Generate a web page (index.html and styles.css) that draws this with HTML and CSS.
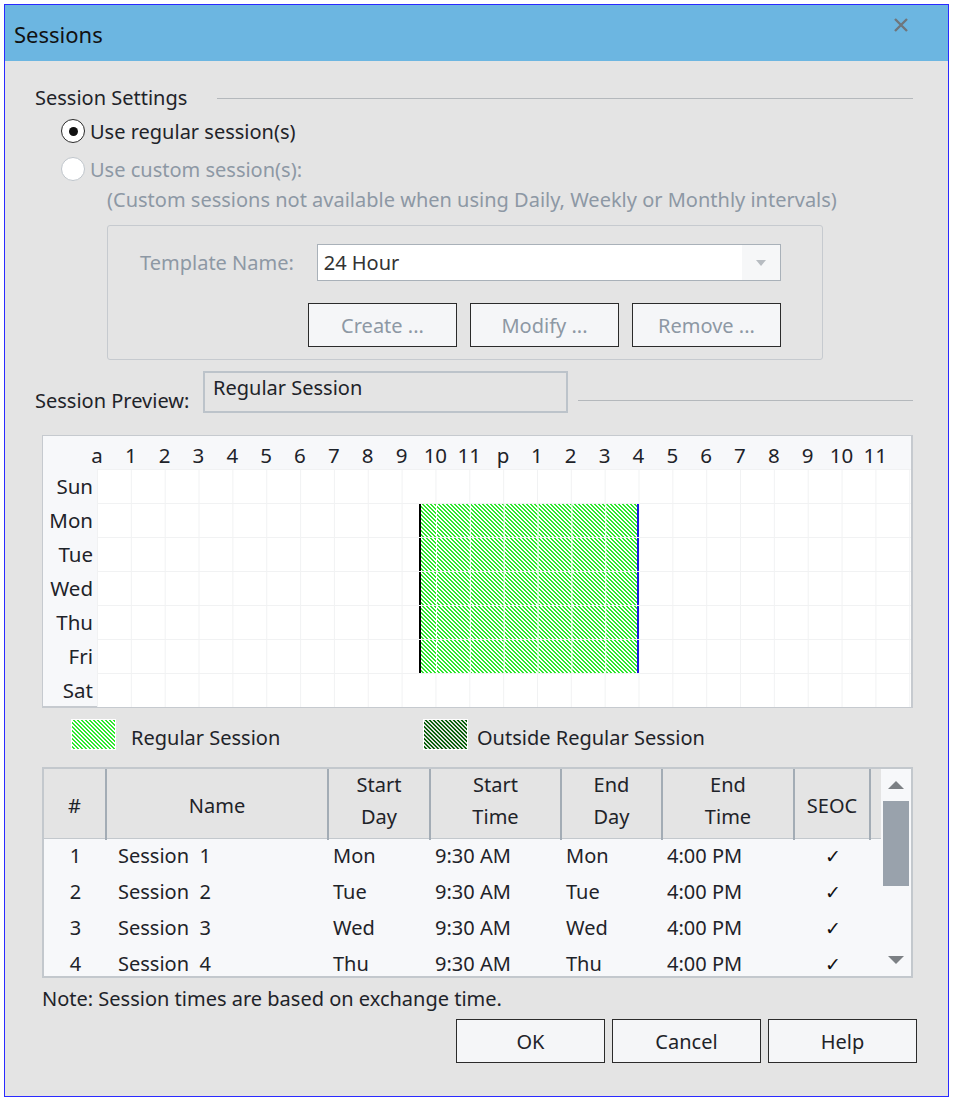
FILE: index.html
```html
<!DOCTYPE html>
<html>
<head>
<meta charset="utf-8">
<link rel="stylesheet" href="styles.css">
</head>
<body>
<div class="dialog">
  <div class="titlebar">
    <span class="title">Sessions</span>
    <svg class="close" width="16" height="16" viewBox="0 0 16 16"><path d="M2 2 L14 14 M14 2 L2 14" stroke="#6f767c" stroke-width="2.4" fill="none"/></svg>
  </div>
  <div class="body">
    <div class="heading"><span>Session Settings</span></div>
    <div class="radio-row"><span class="radio checked"></span><span>Use regular session(s)</span></div>
    <div class="radio-row disabled"><span class="radio"></span><span>Use custom session(s):</span></div>
    <div class="custom-note">(Custom sessions not available when using Daily, Weekly or Monthly intervals)</div>
    <div class="group">
      <div class="tpl-row">
        <span class="tpl-label">Template Name:</span>
        <div class="combo"><span class="combo-text">24 Hour</span><span class="combo-btn"><span class="tri"></span></span></div>
      </div>
      <div class="tpl-buttons">
        <button class="btn dis">Create ...</button>
        <button class="btn dis">Modify ...</button>
        <button class="btn dis">Remove ...</button>
      </div>
    </div>
    <div class="preview-row">
      <span class="preview-label">Session Preview:</span>
      <div class="preview-box">Regular Session</div>
      <div class="preview-line"></div>
    </div>
    <div class="chart">
      <div class="chart-head">
        <div class="head-spacer"></div>
        <div class="hours">
          <span>a</span><span>1</span><span>2</span><span>3</span><span>4</span><span>5</span><span>6</span><span>7</span><span>8</span><span>9</span><span>10</span><span>11</span><span>p</span><span>1</span><span>2</span><span>3</span><span>4</span><span>5</span><span>6</span><span>7</span><span>8</span><span>9</span><span>10</span><span>11</span>
        </div>
      </div>
      <div class="chart-row"><span class="day">Sun</span><div class="cells"></div></div>
      <div class="chart-row"><span class="day">Mon</span><div class="cells"><div class="sess"></div></div></div>
      <div class="chart-row"><span class="day">Tue</span><div class="cells"><div class="sess"></div></div></div>
      <div class="chart-row"><span class="day">Wed</span><div class="cells"><div class="sess"></div></div></div>
      <div class="chart-row"><span class="day">Thu</span><div class="cells"><div class="sess"></div></div></div>
      <div class="chart-row"><span class="day">Fri</span><div class="cells"><div class="sess"></div></div></div>
      <div class="chart-row"><span class="day">Sat</span><div class="cells"></div></div>
    </div>
    <div class="legend">
      <span class="swatch reg"></span><span class="leg-text">Regular Session</span>
      <span class="swatch out"></span><span class="leg-text">Outside Regular Session</span>
    </div>
    <div class="table">
      <div class="tbl-main">
        <div class="trow thead">
          <div class="c one">#</div>
          <div class="c one">Name</div>
          <div class="c">Start<br>Day</div>
          <div class="c">Start<br>Time</div>
          <div class="c">End<br>Day</div>
          <div class="c">End<br>Time</div>
          <div class="c one">SEOC</div>
          <div class="c"></div>
        </div>
        <div class="trow tdata"><div class="c num">1</div><div class="c name">Session&nbsp;&nbsp;1</div><div class="c">Mon</div><div class="c">9:30 AM</div><div class="c">Mon</div><div class="c">4:00 PM</div><div class="c chk">&#10003;</div><div class="c"></div></div>
        <div class="trow tdata"><div class="c num">2</div><div class="c name">Session&nbsp;&nbsp;2</div><div class="c">Tue</div><div class="c">9:30 AM</div><div class="c">Tue</div><div class="c">4:00 PM</div><div class="c chk">&#10003;</div><div class="c"></div></div>
        <div class="trow tdata"><div class="c num">3</div><div class="c name">Session&nbsp;&nbsp;3</div><div class="c">Wed</div><div class="c">9:30 AM</div><div class="c">Wed</div><div class="c">4:00 PM</div><div class="c chk">&#10003;</div><div class="c"></div></div>
        <div class="trow tdata"><div class="c num">4</div><div class="c name">Session&nbsp;&nbsp;4</div><div class="c">Thu</div><div class="c">9:30 AM</div><div class="c">Thu</div><div class="c">4:00 PM</div><div class="c chk">&#10003;</div><div class="c"></div></div>
      </div>
      <div class="scrollbar">
        <span class="arrow up"></span>
        <span class="thumb"></span>
        <span class="sb-fill"></span>
        <span class="arrow down"></span>
      </div>
    </div>
    <div class="footnote">Note: Session times are based on exchange time.</div>
    <div class="footer">
      <button class="btn">OK</button>
      <button class="btn">Cancel</button>
      <button class="btn">Help</button>
    </div>
  </div>
</div>
</body>
</html>
```
FILE: styles.css
```css
* { box-sizing: border-box; }
body {
  margin: 0;
  background: #ffffff;
  font-family: "Noto Sans", "Open Sans", sans-serif;
  font-size: 20px;
  color: #1e2329;
}
.dialog {
  margin: 4px 0 0 4px;
  width: 945px;
  height: 1093px;
  border: 1px solid #2a2aff;
  background: #e4e4e4;
}
.titlebar {
  height: 56px;
  background: #6cb6e1;
  display: flex;
  align-items: center;
  justify-content: space-between;
  padding: 0 39px 0 9px;
}
.title { font-size: 22px; color: #111; margin-top: 2px; }
.close { margin-top: -16px; }
.body { padding: 0 35px 0 37px; }
.heading {
  margin: 25px 0 0 -7px;
  height: 24px;
  line-height: 24px;
  display: flex;
  align-items: center;
}
.heading::after {
  content: "";
  flex: 1;
  height: 1px;
  background: #b4b8bc;
  margin-left: 30px;
}
.radio-row {
  display: flex;
  align-items: center;
  height: 26px;
  margin: 8px 0 0 19px;
}
.radio-row.disabled { margin-top: 12px; color: #8d98a4; }
.radio {
  width: 24px;
  height: 24px;
  border-radius: 50%;
  border: 1px solid #2a2a2a;
  background: #fff;
  margin-right: 5px;
  display: flex;
  align-items: center;
  justify-content: center;
}
.radio.checked::after {
  content: "";
  width: 9px;
  height: 9px;
  border-radius: 50%;
  background: #111;
}
.disabled .radio { border-color: #bfc5cb; }
.custom-note {
  margin: 5px 0 0 65px;
  height: 26px;
  line-height: 26px;
  color: #8d98a4;
}
.group {
  margin: 12px 0 0 65px;
  width: 716px;
  height: 135px;
  border: 1px solid #c6cacf;
  border-radius: 3px;
  padding: 18px 41px 0 32px;
}
.tpl-row { display: flex; align-items: center; }
.tpl-label { color: #8d98a4; width: 177px; }
.combo {
  width: 465px;
  height: 37px;
  background: #fff;
  border: 1px solid #a9b1b9;
  display: flex;
}
.combo-text { flex: 1; padding-left: 6px; line-height: 36px; color: #333; }
.combo-btn {
  width: 38px;
  background: #f6f7f8;
  display: flex;
  align-items: center;
  justify-content: center;
}
.tri {
  width: 0; height: 0;
  border-left: 5px solid transparent;
  border-right: 5px solid transparent;
  border-top: 6px solid #b7bcc1;
}
.tpl-buttons {
  margin-top: 22px;
  display: flex;
  justify-content: flex-end;
  gap: 13px;
}
.btn {
  width: 149px;
  height: 44px;
  background: #f5f6f8;
  border: 1px solid #2b2b2b;
  font-family: inherit;
  font-size: 20px;
  color: #1e2329;
  padding: 0;
}
.btn.dis { color: #8d98a4; }
.preview-row {
  margin: 11px 0 0 -7px;
  display: flex;
  align-items: flex-start;
  height: 42px;
}
.preview-label { margin-top: 16px; width: 168px; }
.preview-box {
  width: 365px;
  height: 42px;
  border: 2px solid #bcc3ca;
  padding: 0 0 0 8px;
  line-height: 30px;
}
.preview-line {
  flex: 1;
  height: 1px;
  background: #b4b8bc;
  margin: 29px 0 0 10px;
}
.chart {
  margin-top: 22px;
  height: 273px;
  border: 1px solid #c6cacf;
  border-width: 1px 2px 2px 1px;
  background: #f7f8fa;
  font-size: 20.5px;
}
.chart-head { display: flex; height: 33px; }
.head-spacer { width: 37px; }
.hours { display: flex; }
.hours span {
  width: 33.85px;
  text-align: center;
  line-height: 38px;
}
.chart-row { display: flex; height: 34px; }
.day {
  width: 54px;
  text-align: right;
  padding-right: 4px;
  line-height: 35px;
}
.cells {
  flex: 1;
  background-color: #fff;
  background-image:
    linear-gradient(to right, #f1f2f3 1px, transparent 1px),
    linear-gradient(to bottom, #f1f2f3 1px, transparent 1px);
  background-size: 33.85px 34px, 100% 34px;
  display: grid;
  grid-template-columns: repeat(48, 16.925px);
}
.sess {
  grid-column: 20 / 33;
  margin-top: 1px;
  border-left: 2px solid #000;
  border-right: 2px solid #1818e0;
  background-color: #fff;
  background-image:
    linear-gradient(to right, #fff 1px, transparent 1px),
    linear-gradient(45deg, #2ee82e 0 30%, #fff 30% 50%, #2ee82e 50% 80%, #fff 80% 100%);
  background-size: 33.85px 100%, 4px 4px;
  background-position: 15px 0, 0 0;
}
.legend {
  margin-top: 11px;
  height: 31px;
  display: flex;
  align-items: center;
  padding-left: 29px;
}
.swatch {
  width: 45px;
  height: 31px;
  border: 1px solid #fff;
}
.swatch.reg {
  background-color: #fff;
  background-image: linear-gradient(45deg, #2ee82e 0 30%, #fff 30% 50%, #2ee82e 50% 80%, #fff 80% 100%);
  background-size: 4px 4px;
}
.swatch.out {
  background-color: #fff;
  background-image: linear-gradient(45deg, #0b5e0b 0 30%, #dfe6df 30% 50%, #0b5e0b 50% 80%, #dfe6df 80% 100%);
  background-size: 4px 4px;
}
.leg-text { margin-left: 15px; width: 292px; padding-top: 5px; }
.legend .leg-text:last-child { margin-left: 9px; width: auto; }
.table {
  margin-top: 17px;
  height: 211px;
  border: 2px solid #c3c8cd;
  display: flex;
  overflow: hidden;
  background: #f7f8fa;
  font-size: 20px;
}
.tbl-main { flex: 1; overflow: hidden; }
.trow {
  display: grid;
  grid-template-columns: 63px 222px 102px 131px 101px 132px 76px 1fr;
}
.thead { height: 70px; background: #e4e4e4; border-bottom: 1px solid #c3c8cd; }
.thead .c {
  border-right: 2px solid #a3acb5;
  text-align: center;
  line-height: 32px;
  display: flex;
  align-items: center;
  justify-content: center;
  padding-bottom: 7px;
}
.thead .c.one { padding: 2px 0 0; }
.thead .c:last-child { border-right: 0; }
.tdata { height: 36px; line-height: 34px; }
.tdata .c { padding-left: 4px; }
.tdata .num { text-align: center; padding-left: 0; }
.tdata .name { padding-left: 11px; }
.tdata .chk { text-align: center; padding-left: 0; font-size: 19px; font-family: "DejaVu Sans", sans-serif; color: #111; }
.scrollbar {
  width: 30px;
  display: flex;
  flex-direction: column;
  align-items: center;
  background: #f7f8fa;
}
.arrow {
  width: 0; height: 0;
  border-left: 8px solid transparent;
  border-right: 8px solid transparent;
}
.arrow.up { border-bottom: 8px solid #7c8084; margin-top: 12px; }
.arrow.down { border-top: 8px solid #7c8084; margin-bottom: 12px; }
.thumb { width: 26px; height: 85px; background: #99a2ac; margin-top: 12px; }
.sb-fill { flex: 1; }
.footnote {
  margin-top: 9px;
  height: 24px;
  line-height: 24px;
}
.footer {
  margin: 8px -4px 0 0;
  display: flex;
  justify-content: flex-end;
  gap: 7px;
}
```
